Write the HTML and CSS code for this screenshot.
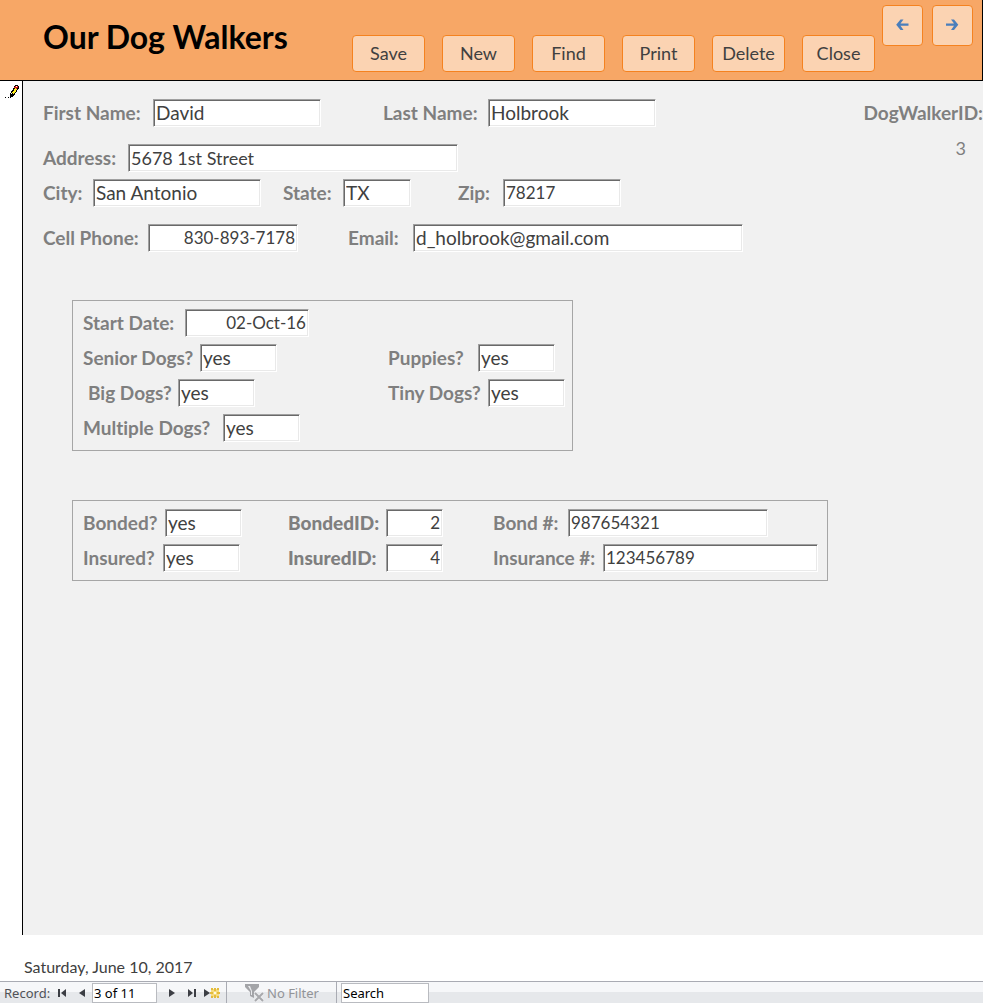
FILE: index.html
```html
<!DOCTYPE html>
<html lang="en">
<head>
<meta charset="utf-8">
<title>Our Dog Walkers</title>
<link rel="stylesheet" href="styles.css">
</head>
<body>
<header class="header">
  <h1 class="title">Our Dog Walkers</h1>
  <div class="actions">
    <button class="btn" type="button">Save</button>
    <button class="btn" type="button">New</button>
    <button class="btn" type="button">Find</button>
    <button class="btn" type="button">Print</button>
    <button class="btn" type="button">Delete</button>
    <button class="btn" type="button">Close</button>
  </div>
  <div class="arrows">
    <button class="btn arrow" type="button" aria-label="Previous record"><svg width="13" height="12" viewBox="0 0 13 12"><path d="M4.500 0.500h3L4.500 4.600H12.500v2.200H4.500L7.500 11h-3L0.200 5.700z"/></svg></button>
    <button class="btn arrow" type="button" aria-label="Next record"><svg width="13" height="12" viewBox="0 0 13 12"><path d="M8 0.500H5l3 4.100H0v2.200h8L5 11h3L12.300 5.700z"/></svg></button>
  </div>
</header>
<div class="record">
  <div class="selector">
    <svg width="14" height="14" viewBox="0 0 14 14" shape-rendering="crispEdges">
      <path fill="#000" d="M0 12h1v1H0zM3 12h1v1H3zM5 13V8h1V6h1V5h1V3h1V1h1V0h3v1h1v3h-1v1h-1v2h-1v1h-1v2H9v1H8v1H6v1z"/>
      <path fill="#ffee20" d="M7 7h1V6h1V4h1V3h1v1h1v1h-1v2h-1v1H9v1H8V8H7z"/>
      <path fill="#d01818" d="M9 2h1V1h3v2h-1v1h-1V3H9z"/>
      <path fill="#fff" d="M11 1h1v1h-1zM6 8h1v1H6z"/>
    </svg>
  </div>
  <main class="detail">
    <form class="person">
      <div class="row spaced">
        <div class="field wide"><label class="l110" for="first">First Name:</label><input class="w168" id="first" value="David"></div>
        <div class="field"><label class="l105" for="last">Last Name:</label><input class="w168" id="last" value="Holbrook"></div>
      </div>
      <div class="row">
        <div class="field"><label class="l85" for="address">Address:</label><input class="w330 street" id="address" value="5678 1st Street"></div>
      </div>
      <div class="row spaced">
        <div class="field city"><label class="l50" for="city">City:</label><input class="w168" id="city" value="San Antonio"></div>
        <div class="field state"><label class="l60" for="state">State:</label><input class="w68" id="state" value="TX"></div>
        <div class="field"><label class="l45" for="zip">Zip:</label><input class="w118 digits" id="zip" value="78217"></div>
      </div>
      <div class="row">
        <div class="field phone"><label class="l105" for="cell">Cell Phone:</label><input class="w150 digits num" id="cell" value="830-893-7178"></div>
        <div class="field"><label class="l65" for="email">Email:</label><input class="w330" id="email" value="d_holbrook@gmail.com"></div>
      </div>
      <section class="panel dogs">
        <div class="field"><label class="l102" for="start">Start Date:</label><input class="w124 digits num" id="start" value="02-Oct-16"></div>
        <div class="row">
          <div class="field first"><label class="l117" for="senior">Senior Dogs?</label><input class="w77" id="senior" value="yes"></div>
          <div class="field"><label class="l90" for="puppies">Puppies?</label><input class="w77" id="puppies" value="yes"></div>
        </div>
        <div class="row">
          <div class="field first"><label class="l90 indent" for="big">Big Dogs?</label><input class="w77" id="big" value="yes"></div>
          <div class="field"><label class="l100" for="tiny">Tiny Dogs?</label><input class="w77" id="tiny" value="yes"></div>
        </div>
        <div class="field"><label class="l140" for="multiple">Multiple Dogs?</label><input class="w77" id="multiple" value="yes"></div>
      </section>
      <section class="panel cover">
        <div class="row">
          <div class="field flag"><label class="l82" for="bonded">Bonded?</label><input class="w77" id="bonded" value="yes"></div>
          <div class="field key"><label class="l98" for="bondedid">BondedID:</label><input class="w57 digits num" id="bondedid" value="2"></div>
          <div class="field"><label class="l75" for="bond">Bond #:</label><input class="w200 digits" id="bond" value="987654321"></div>
        </div>
        <div class="row">
          <div class="field flag"><label class="l80" for="insured">Insured?</label><input class="w77" id="insured" value="yes"></div>
          <div class="field key"><label class="l98" for="insuredid">InsuredID:</label><input class="w57 digits num" id="insuredid" value="4"></div>
          <div class="field"><label class="l110" for="insurance">Insurance #:</label><input class="w215 digits" id="insurance" value="123456789"></div>
        </div>
      </section>
    </form>
    <div class="walker-id">
      <label for="walker">DogWalkerID:</label>
      <output id="walker">3</output>
    </div>
  </main>
</div>
<div class="date">Saturday, June 10, 2017</div>
<footer class="nav">
  <label class="nav-label" for="position">Record:</label>
  <button class="nav-btn" type="button" aria-label="First record"><svg width="8" height="8" viewBox="0 0 8 8"><path d="M0 0h2v8H0zM8 0v8L3 4z"/></svg></button>
  <button class="nav-btn" type="button" aria-label="Previous record"><svg width="8" height="8" viewBox="0 0 8 8"><path d="M7 0v8L1 4z"/></svg></button>
  <input class="nav-input position" id="position" value="3 of 11">
  <button class="nav-btn" type="button" aria-label="Next record"><svg width="8" height="8" viewBox="0 0 8 8"><path d="M1 0v8l6-4z"/></svg></button>
  <button class="nav-btn" type="button" aria-label="Last record"><svg width="8" height="8" viewBox="0 0 8 8"><path d="M6 0h2v8H6zM0 0v8l5-4z"/></svg></button>
  <button class="nav-btn" type="button" aria-label="New record"><svg width="16" height="10" viewBox="0 0 16 10"><path d="M0 1v8l6-4z"/><path fill="#f6dc80" d="M7 1h8v8H7z"/><path fill="#e3bb3c" d="M7 0h2v2H7zM10 0h2v3h-2zM13 0h2v2h-2zM6 4h3v2H6zM13 4h3v2h-3zM7 8h2v2H7zM10 7h2v3h-2zM13 8h2v2h-2z"/><path fill="#fffbe6" d="M10 4h2v2h-2z"/></svg></button>
  <button class="filter" type="button" disabled><svg width="19" height="18" viewBox="0 0 19 18"><path fill="#a3a4a8" d="M0 0h14v3L9 8v6l-4-2V8L0 3z"/><path fill="#e9eaed" d="M3 2h2l2 5v4H6V7z"/><path d="M10 9l8 8M18 9l-8 8" stroke="#eeeff1" stroke-width="4"/><path d="M10 9l8 8M18 9l-8 8" stroke="#a8a9ad" stroke-width="2"/></svg>No Filter</button>
  <input class="nav-input search" aria-label="Search" value="Search">
</footer>
</body>
</html>
```
FILE: styles.css
```css
* { box-sizing: border-box; }
body {
  margin: 0;
  min-height: 100vh;
  display: flex;
  flex-direction: column;
  background: #fff;
  color: #404040;
  font: 18px/28px Lato, sans-serif;
  font-variant-ligatures: none;
}
button, input { font: inherit; font-variant-ligatures: none; color: inherit; margin: 0; }
.header {
  display: flex;
  align-items: flex-start;
  height: 81px;
  padding-left: 43px;
  background: #f7a766;
  border-bottom: 1px solid #000;
  border-right: 1px solid #000;
}
.title {
  flex: 0 0 309px;
  margin: 17px 0 0;
  color: #000;
  font-size: 32px;
  line-height: 40px;
  font-weight: 700;
}
.actions { display: flex; gap: 17px; margin-top: 35px; }
.arrows { display: flex; gap: 9px; margin: 5px 0 0 7px; }
.btn {
  width: 73px;
  height: 37px;
  padding: 0 0 2px;
  border: 1px solid #f5821f;
  border-radius: 4px;
  background: #fbd3b2;
}
.arrow {
  display: flex;
  align-items: center;
  justify-content: center;
  width: 41px;
  height: 41px;
  fill: #4a7ebb;
}
.record { flex: 1; display: flex; }
.selector {
  flex: 0 0 23px;
  padding: 4px 0 0 5px;
  border-right: 1px solid #000;
  line-height: 0;
}
.detail {
  flex: 1;
  display: flex;
  justify-content: space-between;
  padding: 18px 0 0 20px;
  background: #f1f1f1;
}
.person { display: flex; flex-direction: column; gap: 7px; }
.row { display: flex; }
.spaced { margin-bottom: 10px; }
.field { display: flex; }
.field label, .walker-id label {
  color: #7f7f7f;
  font-size: 19px;
  font-weight: 700;
  white-space: nowrap;
}
.field input {
  height: 28px;
  padding: 0 2px;
  border: 1px solid;
  border-color: #a0a0a0 #fff #fff #a0a0a0;
  box-shadow: inset 1px 1px #696969, inset -1px -1px #e9e9e9;
  background: #fff;
  font-size: 19px;
}
.field input.digits { font-size: 17px; }
.field input.street { font-size: 18px; }
.field input.num { text-align: right; }
.wide { width: 340px; }
.city { width: 240px; }
.state { width: 175px; }
.phone { width: 305px; }
.panel {
  display: flex;
  flex-direction: column;
  gap: 7px;
  padding: 8px 7px 8px 10px;
  margin-left: 29px;
  border: 1px solid #a6a6a6;
  align-self: flex-start;
}
.dogs { margin-top: 41px; }
.cover { margin-top: 42px; padding-right: 9px; }
.first { width: 305px; }
.flag { width: 205px; }
.key { width: 205px; }
.field.key label { font-weight: 900; }
.indent { margin-left: 5px; }
.l45 { width: 45px; }
.l50 { width: 50px; }
.l60 { width: 60px; }
.l65 { width: 65px; }
.l75 { width: 75px; }
.l80 { width: 80px; }
.l82 { width: 82px; }
.l85 { width: 85px; }
.l90 { width: 90px; }
.l98 { width: 98px; }
.l100 { width: 100px; }
.l102 { width: 102px; }
.l105 { width: 105px; }
.l110 { width: 110px; }
.l117 { width: 117px; }
.l140 { width: 140px; }
.w57 { width: 57px; }
.w68 { width: 68px; }
.w77 { width: 77px; }
.w118 { width: 118px; }
.w124 { width: 124px; }
.w150 { width: 150px; }
.w168 { width: 168px; }
.w200 { width: 200px; }
.w215 { width: 215px; }
.w330 { width: 330px; }
.walker-id { display: flex; flex-direction: column; gap: 7px; }
.walker-id output { padding-right: 17px; text-align: right; color: #7f7f7f; }
.date { height: 46px; padding: 18px 0 0 24px; font-size: 16px; }
.nav {
  display: flex;
  align-items: center;
  height: 22px;
  padding-left: 4px;
  border-top: 1px solid #a9abb3;
  background: linear-gradient(#f6f7f9 50%, #e6e8eb 50%);
  font: 13px/20px "Noto Sans", sans-serif;
  color: #505257;
}
.nav-label { width: 48px; }
.nav-btn {
  display: flex;
  align-items: center;
  justify-content: center;
  width: 20px;
  height: 20px;
  padding: 0;
  border: 0;
  background: none;
  fill: #3c3e44;
}
.nav-input {
  height: 20px;
  padding: 0 1px;
  border: 1px solid #b9bbc0;
  background: #fff;
  color: #000;
}
.position { width: 65px; margin-right: 5px; }
.filter {
  display: flex;
  align-items: center;
  gap: 3px;
  height: 21px;
  width: 111px;
  margin: 0 4px;
  padding: 0 0 0 18px;
  border: solid #a9abb3;
  border-width: 0 1px;
  background: none;
  color: #929498;
}
.search { width: 88px; }
```
